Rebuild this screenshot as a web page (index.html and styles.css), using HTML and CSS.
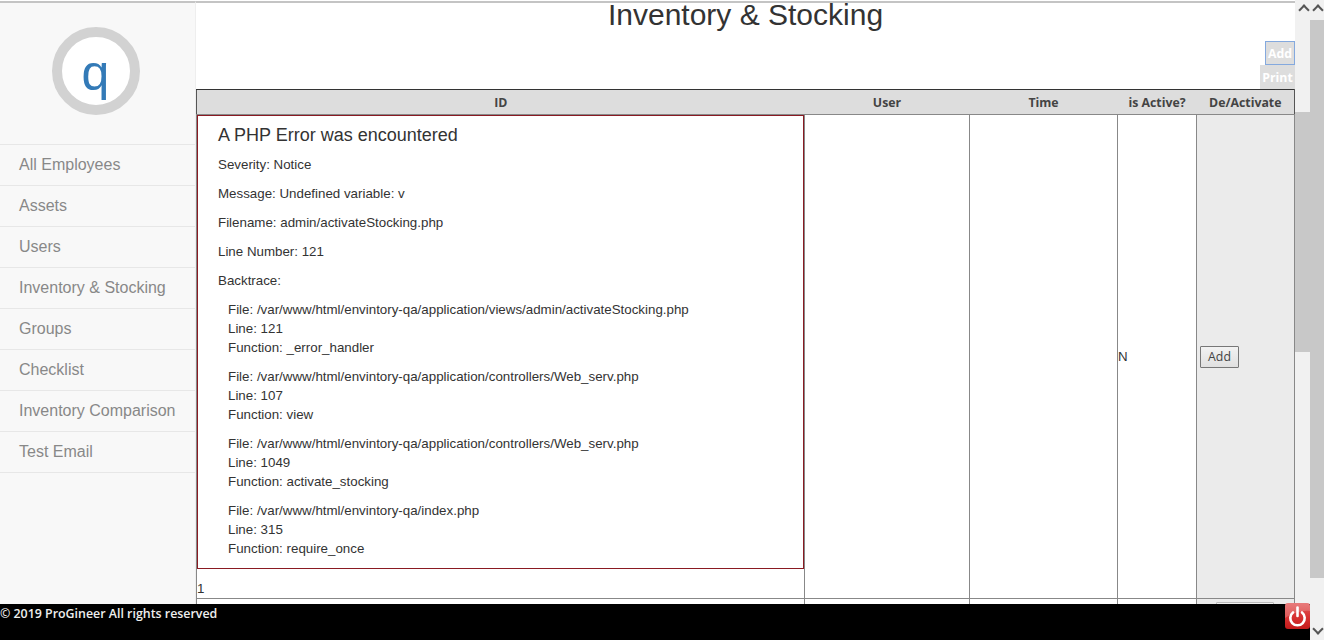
FILE: index.html
```html
<!DOCTYPE html>
<html lang="en">
<head>
    <meta charset="UTF-8">
    <title>Inventory &amp; Stocking</title>
    <link rel="stylesheet" href="styles.css">
</head>
<body>
    <div class="viewport">
        <div class="window">
            <aside class="sidebar">
                <div class="logo-wrap">
                    <div class="logo">q</div>
                </div>
                <ul class="nav">
                    <li>All Employees</li>
                    <li>Assets</li>
                    <li>Users</li>
                    <li>Inventory &amp; Stocking</li>
                    <li>Groups</li>
                    <li>Checklist</li>
                    <li>Inventory Comparison</li>
                    <li>Test Email</li>
                </ul>
            </aside>

            <main class="main">
                <h1>Inventory &amp; Stocking</h1>
                <div class="actions">
                    <button class="btn-top btn-add">Add</button>
                    <button class="btn-top btn-print">Print</button>
                </div>
                <table class="grid">
                    <colgroup>
                        <col class="col-id">
                        <col class="col-user">
                        <col class="col-time">
                        <col class="col-active">
                        <col class="col-action">
                    </colgroup>
                    <thead>
                        <tr>
                            <th>ID</th>
                            <th>User</th>
                            <th>Time</th>
                            <th>is Active?</th>
                            <th>De/Activate</th>
                        </tr>
                    </thead>
                    <tbody>
                        <tr class="row-main">
                            <td>
                                <div class="php-error">
                                    <h4>A PHP Error was encountered</h4>
                                    <p>Severity: Notice</p>
                                    <p>Message: Undefined variable: v</p>
                                    <p>Filename: admin/activateStocking.php</p>
                                    <p>Line Number: 121</p>
                                    <p>Backtrace:</p>
                                    <p class="trace">File: /var/www/html/envintory-qa/application/views/admin/activateStocking.php<br>Line: 121<br>Function: _error_handler</p>
                                    <p class="trace">File: /var/www/html/envintory-qa/application/controllers/Web_serv.php<br>Line: 107<br>Function: view</p>
                                    <p class="trace">File: /var/www/html/envintory-qa/application/controllers/Web_serv.php<br>Line: 1049<br>Function: activate_stocking</p>
                                    <p class="trace">File: /var/www/html/envintory-qa/index.php<br>Line: 315<br>Function: require_once</p>
                                </div>
                                1
                            </td>
                            <td></td>
                            <td></td>
                            <td>N</td>
                            <td class="cell-action"><button class="btn-row">Add</button></td>
                        </tr>
                        <tr class="row-next">
                            <td></td>
                            <td></td>
                            <td></td>
                            <td></td>
                            <td class="cell-action"><button class="btn-row">Add</button></td>
                        </tr>
                    </tbody>
                </table>
            </main>

            <div class="scroll-inner">
                <div class="arrow-up"></div>
                <div class="thumb-inner"></div>
            </div>

            <footer class="footer">
                <span>© 2019 ProGineer All rights reserved</span>
                <div class="power">
                    <svg width="25" height="26" viewBox="0 0 25 26">
                        <defs>
                            <linearGradient id="red" x1="0" y1="0" x2="0" y2="1">
                                <stop offset="0" stop-color="#e25a5a"/>
                                <stop offset="0.5" stop-color="#d83434"/>
                                <stop offset="1" stop-color="#c41a1a"/>
                            </linearGradient>
                        </defs>
                        <rect width="25" height="26" rx="3" fill="url(#red)"/>
                        <path d="M0 3a3 3 0 0 1 3-3h19a3 3 0 0 1 3 3v5C17 7 8 10 0 15z" fill="#fff" opacity="0.2"/>
                        <path d="M8 9.5a7.2 7.2 0 1 0 9 0" fill="none" stroke="#fff" stroke-width="2.6" stroke-linecap="round"/>
                        <path d="M12.5 4.5v8.5" fill="none" stroke="#fff" stroke-width="2.6" stroke-linecap="round"/>
                    </svg>
                </div>
            </footer>
        </div>

        <div class="scroll-outer">
            <div class="arrow-up"></div>
            <div class="thumb-outer"></div>
            <div class="arrow-down"></div>
        </div>
    </div>
</body>
</html>
```

FILE: styles.css
```css
* {
    box-sizing: border-box;
}
html, body {
    height: 100%;
    margin: 0;
    overflow: hidden;
}
body {
    font-family: "Liberation Sans", Arial, sans-serif;
    font-size: 13.33px;
    line-height: 19px;
    color: #333;
    background: #fff;
}
.viewport {
    display: flex;
    height: 640px;
}
.window {
    position: relative;
    display: flex;
    flex: 1;
    min-width: 0;
}

/* sidebar */
.sidebar {
    width: 196px;
    flex: none;
    background: #f8f8f8;
    border-top: 2px solid #c4c4c4;
    margin-top: 1px;
    border-right: 1px solid #eee;
}
.logo-wrap {
    height: 141px;
    display: flex;
    justify-content: center;
    padding: 24px 4px 0 0;
}
.logo {
    width: 88px;
    height: 88px;
    border: 10px solid #d2d2d2;
    border-radius: 50%;
    background: #fff;
    color: #337ab7;
    font-size: 50px;
    line-height: 72px;
    text-align: center;
}
.nav {
    list-style: none;
    margin: 0;
    padding: 0;
    border-top: 1px solid #e7e7e7;
}
.nav li {
    height: 41px;
    padding-left: 19px;
    font-size: 16px;
    line-height: 40px;
    color: #888;
    border-bottom: 1px solid #e7e7e7;
}

/* main area */
.main {
    flex: 1;
    min-width: 0;
    border-top: 2px solid #c4c4c4;
    margin-top: 1px;
    overflow: hidden;
}
h1 {
    margin: 0;
    height: 38px;
    font-size: 30px;
    font-weight: 400;
    line-height: 24px;
    text-align: center;
    color: #333;
}
.actions {
    display: flex;
    flex-direction: column;
    align-items: flex-end;
    height: 48px;
}
.btn-top {
    height: 24px;
    padding: 0 2px;
    border: 0;
    background: #ddd;
    color: #fff;
    font-family: "Open Sans", sans-serif;
    font-size: 12.3px;
    font-weight: 700;
}
.btn-add {
    border: 1px solid #84a9de;
    padding: 0 2px;
}
.btn-print {
    width: 35px;
}
.grid {
    width: 1098px;
    table-layout: fixed;
    border-collapse: collapse;
    border: 1px solid #555;
    border-top-color: #333;
}
.col-id { width: 608px; }
.col-user { width: 165px; }
.col-time { width: 148px; }
.col-active { width: 79px; }
.col-action { width: 98px; }
.grid th {
    height: 25px;
    padding: 0;
    background: #ddd;
    color: #444;
    font-family: "Open Sans", sans-serif;
    font-size: 12.3px;
    font-weight: 700;
    border-bottom: 1px solid #888;
}
.grid td {
    padding: 0;
    border: 1px solid #888;
}
.row-main {
    height: 484px;
}
.row-next {
    height: 40px;
}
.cell-action {
    background: #ebebeb;
    padding-left: 3px !important;
}
.row-next td {
    vertical-align: top;
}
.row-next .cell-action {
    padding: 3px 0 0 19px !important;
}
.row-next .btn-row {
    width: 58px;
    border-color: #bbb;
}
.btn-row {
    height: 22px;
    width: 39px;
    padding: 0;
    border: 1px solid #777;
    border-radius: 1px;
    background: linear-gradient(#f2f2f2, #e0e0e0);
    color: #444;
    font-family: "Open Sans", sans-serif;
    font-size: 12.3px;
}

/* php error box */
.php-error {
    margin-bottom: 10px;
    padding: 9px 20px 0;
    height: 454px;
    border: 1px solid #8a1a22;
}
.php-error h4 {
    margin: 0 0 10px;
    font-size: 18px;
    font-weight: 400;
    line-height: 20px;
}
.php-error p {
    margin: 0 0 10px;
}
.php-error .trace {
    margin-left: 10px;
}

/* footer */
.footer {
    position: absolute;
    left: 0;
    right: 0;
    bottom: 0;
    height: 36px;
    background: #000;
    color: #eee;
    font-family: "Open Sans", sans-serif;
    font-size: 12.4px;
    font-weight: 600;
    line-height: 19px;
}
.power {
    position: absolute;
    top: -1px;
    right: 0;
    width: 25px;
    height: 26px;
}

/* scrollbars */
.scroll-inner {
    width: 15px;
    flex: none;
    background: #f1f1f1;
}
.scroll-outer {
    width: 14px;
    flex: none;
    background: #f1f1f1;
    display: flex;
    flex-direction: column;
}
.arrow-up {
    height: 20px;
    flex: none;
    position: relative;
}
.arrow-up::before,
.arrow-down::before {
    content: "";
    position: absolute;
    left: 50%;
    width: 6px;
    height: 6px;
    margin-left: -3px;
    border-left: 2px solid #555;
    border-top: 2px solid #555;
}
.arrow-up::before {
    top: 6px;
    transform: rotate(45deg);
}
.thumb-inner {
    height: 240px;
    margin-top: 92px;
    background: #c8c8c8;
}
.thumb-outer {
    height: 558px;
    flex: none;
    background: #c8c8c8;
}
.arrow-down {
    position: relative;
    flex: 1;
}
.arrow-down::before {
    bottom: 7px;
    transform: rotate(225deg);
}
```
